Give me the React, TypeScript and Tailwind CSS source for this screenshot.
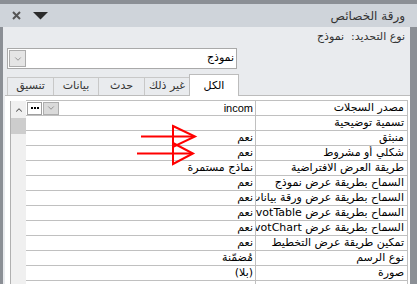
import { ChevronDown, ChevronUp } from 'lucide-react';

const rows: { label: string; value: string }[] = [
  { label: 'مصدر السجلات', value: 'incom' },
  { label: 'تسمية توضيحية', value: '' },
  { label: 'منبثق', value: 'نعم' },
  { label: 'شكلي أو مشروط', value: 'نعم' },
  { label: 'طريقة العرض الافتراضية', value: 'نماذج مستمرة' },
  { label: 'السماح بطريقة عرض نموذج', value: 'نعم' },
  { label: 'السماح بطريقة عرض ورقة بيانات', value: 'نعم' },
  { label: 'السماح بطريقة عرض PivotTable', value: 'نعم' },
  { label: 'السماح بطريقة عرض PivotChart', value: 'نعم' },
  { label: 'تمكين طريقة عرض التخطيط', value: 'نعم' },
  { label: 'نوع الرسم', value: 'مُضمّنة' },
  { label: 'صورة', value: '(بلا)' },
  { label: '', value: '' },
];

const tabs = [
  { name: 'الكل', w: 'w-[50px]' },
  { name: 'غير ذلك', w: 'w-[45px]' },
  { name: 'حدث', w: 'w-[46px]' },
  { name: 'بيانات', w: 'w-[45px]' },
  { name: 'تنسيق', w: 'w-[46px]' },
];

export default function App() {
  return (
    <div
      dir="rtl"
      className="relative w-[417px] h-[284px] overflow-hidden bg-[#8b8f95] pt-[4px] flex flex-col text-[11px] text-black"
      style={{ fontFamily: '"DejaVu Sans", "Liberation Sans", sans-serif' }}
    >
      {/* Title bar */}
      <div className="h-[23px] shrink-0 bg-[#cfd4da] flex items-center justify-between pr-[12px] pl-[12px]">
        <span className="text-[12px] text-[#333]">ورقة الخصائص</span>
        <div className="flex items-center gap-[12px]" dir="ltr">
          <svg width="9" height="9" viewBox="0 0 9 9">
            <path d="M1 1 L8 8 M8 1 L1 8" stroke="#555" strokeWidth="2" />
          </svg>
          <svg width="15" height="8" viewBox="0 0 15 8">
            <path d="M0 0 H15 L7.5 7.5 Z" fill="#2b2b2b" />
          </svg>
        </div>
      </div>

      {/* Body */}
      <div className="flex-1 min-h-0 ml-[3px] mr-[7px] bg-[#e9ebee] flex flex-col pt-[1px]">
        <div className="h-[17px] leading-[17px] pr-[5px] text-[#333]">نوع التحديد:&nbsp; نموذج</div>

        {/* Selection combo */}
        <div className="mt-[3px] self-end ml-[4px] w-[230px] h-[21px] bg-white border border-[#a9a9a9] flex items-center justify-between pr-[2px] pl-[1px]">
          <span>نموذج</span>
          <div className="w-[17px] h-[17px] bg-[#e5e5e5] border border-[#acacac] flex items-center justify-center">
            <ChevronDown className="w-[10px] h-[10px] text-[#666]" strokeWidth={1.5} />
          </div>
        </div>

        {/* Tabs */}
        <div className="mt-[5px] self-end ml-[4px] flex items-end h-[21px]">
          {tabs.map((t, i) => (
            <div
              key={t.name}
              className={
                i === 0
                  ? `${t.w} h-[22px] -mb-px relative z-10 bg-white border border-b-0 border-[#bcbcbc] flex items-center justify-center pt-[1px]`
                  : `${t.w} h-[18px] bg-[#e9ebee] border border-b-0 border-r-0 border-[#c8c8c8] flex items-center justify-center text-[#333]`
              }
            >
              {t.name}
            </div>
          ))}
        </div>

        {/* Property grid panel */}
        <div className="flex-1 min-h-0 ml-[2px] bg-white border-t border-[#bcbcbc] flex pl-[5px] pr-[2px] pt-[4px]">
          <div className="flex-1 border-t border-r border-[#c0c0c0] flex flex-col">
            {rows.map((r, i) => (
              <div key={i} className="h-[15px] shrink-0 flex border-b border-[#c0c0c0]">
                <div className="w-[152px] shrink-0 border-l border-[#c0c0c0] pr-[3px] overflow-hidden whitespace-nowrap leading-[14px]">
                  {r.label}
                </div>
                <div className="flex-1 flex items-center justify-between pr-[2px] pl-[1px] overflow-hidden whitespace-nowrap leading-[14px]">
                  <span style={i === 0 ? { fontFamily: '"Liberation Sans", sans-serif' } : undefined}>{r.value}</span>
                  {i === 0 && (
                    <div className="flex gap-[1px]" dir="ltr">
                      <div className="w-[15px] h-[13px] bg-white border border-[#a0a0a0] flex items-center justify-center gap-[1px]">
                        <span className="w-[2px] h-[2px] bg-black" />
                        <span className="w-[2px] h-[2px] bg-black" />
                        <span className="w-[2px] h-[2px] bg-black" />
                      </div>
                      <div className="w-[16px] h-[13px] bg-[#dadada] border border-[#adadad] flex items-center justify-center">
                        <ChevronDown className="w-[10px] h-[10px] text-[#666]" strokeWidth={1.5} />
                      </div>
                    </div>
                  )}
                </div>
              </div>
            ))}
          </div>
          {/* Scrollbar */}
          <div className="w-[16px] shrink-0 bg-[#f0f0f0] border-l border-[#b0b0b0] flex flex-col items-center mt-[1px]">
            <div className="h-[17px] flex items-center justify-center">
              <ChevronUp className="w-[10px] h-[10px] text-[#555]" strokeWidth={2.5} />
            </div>
            <div className="w-[15px] h-[16px] bg-[#cdcdcd]" />
          </div>
        </div>
      </div>

      {/* Red annotation arrows */}
      <svg className="absolute left-0 top-0 pointer-events-none" width="417" height="284">
        <g stroke="#ff0000" strokeWidth="2" fill="none">
          <path d="M141 136.5 H194" />
          <path d="M173 126 L195 136.5 L173 147 Z" />
          <path d="M137 153.5 H192" />
          <path d="M173 143 L193 153.5 L173 164 Z" />
        </g>
      </svg>
    </div>
  );
}
